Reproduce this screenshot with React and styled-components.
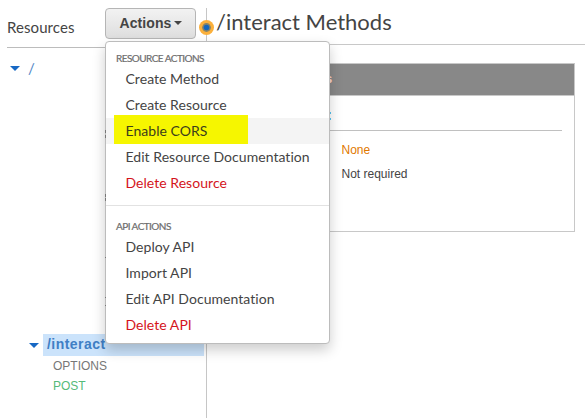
import React from 'react';
import styled, { createGlobalStyle } from 'styled-components';

const Global = createGlobalStyle`
  * { box-sizing: border-box; }
  body { margin: 0; background: #fff; overflow: hidden; font-family: "Liberation Sans", Arial, sans-serif; color: #444; }
`;

const Page = styled.div`
  position: relative;
  display: flex;
  width: 585px;
  height: 418px;
  padding-top: 8px;
  overflow: hidden;
`;

const Sidebar = styled.aside`
  width: 207px;
  border-right: 1px solid #c6c6c6;
  padding-left: 7px;
`;

const SidebarHeader = styled.header`
  display: flex;
  justify-content: space-between;
  width: 189px;
  height: 40px;
  border-bottom: 1px solid #bcbcbc;
`;

const SidebarTitle = styled.h2`
  margin: 0;
  padding-top: 8px;
  font: 400 15px/22px Lato, sans-serif;
  letter-spacing: 0.08px;
`;

const ActionsButton = styled.button`
  display: flex;
  align-items: center;
  justify-content: center;
  gap: 2px;
  width: 91px;
  height: 31px;
  padding: 0 0 2px;
  border: 1px solid #b5b5b5;
  border-radius: 4px;
  background: linear-gradient(#f2f2f2, #dedede);
  color: #444;
  font: 700 14px/20px "Liberation Sans", Arial, sans-serif;
  letter-spacing: 0.1px;
`;

const Caret = styled.span`
  width: 0;
  height: 0;
  border: ${(p) => p.$size}px solid transparent;
  border-top-color: ${(p) => p.$color};
  border-bottom: 0;
`;

const Tree = styled.div`
  display: flex;
  flex-direction: column;
`;

const TreeRow = styled.div`
  display: flex;
  align-items: center;
  height: 22px;
  margin-top: ${(p) => p.$top}px;
  padding-left: ${(p) => p.$indent}px;
`;

const RootPath = styled.span`
  margin-left: 8px;
  color: #5287c6;
  font: 400 15px/20px Lato, sans-serif;
`;

const SelectedPath = styled.div`
  flex: 1;
  height: 22px;
  margin: 0 2px 0 4px;
  padding-left: 4px;
  background: #cbe3fb;
  color: #3f7fc5;
  font-weight: 700;
  font-size: 14px;
  line-height: 20px;
  letter-spacing: 0.45px;
`;

const Method = styled.div`
  height: 20px;
  padding-left: 46px;
  color: ${(p) => p.$color};
  font-size: 12px;
  line-height: 20px;
`;

const Main = styled.main`
  flex: 1;
`;

const Title = styled.h1`
  height: 37px;
  margin: 0;
  padding-left: 9px;
  border-bottom: 1px solid #c8c8c8;
  font: 400 22px/28px Lato, sans-serif;
`;

const Card = styled.section`
  width: 353px;
  height: 169px;
  margin: 18px 0 0 15px;
  border: 1px solid #c8c8c8;
`;

const CardHeader = styled.div`
  height: 32px;
  padding-left: 102px;
  border-bottom: 1px solid #c8c8c8;
  background: #888;
  color: #ffd5c8;
  font: 700 13px/30px "Liberation Sans", Arial, sans-serif;
`;

const CardBody = styled.div`
  margin: 0 12px;
`;

const CardLabel = styled.div`
  height: 35px;
  padding-left: 92px;
  border-bottom: 1px solid #c0c0c0;
  color: #00558f;
  font: 700 14px/38px "Liberation Sans", Arial, sans-serif;
`;

const Value = styled.div`
  height: 24px;
  padding-left: 106.5px;
  color: ${(p) => p.$color};
  font-size: 12px;
  line-height: 24px;
`;

const Values = styled.div`
  padding-top: 7px;
`;

const Focus = styled.svg`
  position: absolute;
  left: 199px;
  top: 20px;
`;

const Menu = styled.nav`
  position: absolute;
  left: 105px;
  top: 41px;
  width: 225px;
  height: 303px;
  padding-top: 9px;
  border: 1px solid #bcbcbc;
  border-radius: 4px;
  background: #fff;
  box-shadow: 0 6px 13px rgba(0, 0, 0, 0.2);
`;

const MenuHeading = styled.div`
  height: 15px;
  padding-left: 10px;
  color: #6c6c6c;
  font: 400 10px/15px Lato, sans-serif;
  letter-spacing: -0.55px;
  -webkit-text-stroke: 0.2px currentColor;
`;

const MenuItem = styled.div`
  height: 26px;
  padding-left: 19.5px;
  color: ${(p) => (p.$danger ? '#d4141c' : '#444')};
  font: 400 14px/26px Lato, sans-serif;
  letter-spacing: 0.04px;
`;

const MarkedItem = styled(MenuItem)`
  display: flex;
  align-items: flex-end;
  padding-left: 8px;
  background: #f4f4f4;
`;

const Marker = styled.div`
  width: 134px;
  height: 29px;
  padding: 3px 0 0 11.5px;
  background: #f6f600;
  color: #3c3d1c;
`;

const Divider = styled.div`
  height: 1px;
  margin: 9px 0 13px;
  background: #e2e2e2;
`;

const EdgeMark = styled.span`
  position: absolute;
  left: 105px;
  top: ${(p) => p.$y}px;
  width: 1px;
  height: ${(p) => p.$h}px;
  background: #777;
`;

const edges = [[130, 3], [135, 3], [194, 3], [198, 3], [257, 1], [297, 1], [305, 1]];

export default function App() {
  return (
    <Page>
      <Global />
      <Sidebar>
        <SidebarHeader>
          <SidebarTitle>Resources</SidebarTitle>
          <ActionsButton>Actions<Caret $size={4} $color="#444" /></ActionsButton>
        </SidebarHeader>
        <Tree>
          <TreeRow $top={9} $indent={3}>
            <Caret $size={5} $color="#1768c4" />
            <RootPath>/</RootPath>
          </TreeRow>
          <TreeRow $top={255} $indent={22}>
            <Caret $size={5} $color="#1768c4" />
            <SelectedPath>/interact</SelectedPath>
          </TreeRow>
          <Method $color="#777">OPTIONS</Method>
          <Method $color="#55ba79">POST</Method>
        </Tree>
      </Sidebar>
      <Main>
        <Title>/interact Methods</Title>
        <Card>
          <CardHeader>s</CardHeader>
          <CardBody>
            <CardLabel>:</CardLabel>
            <Values>
              <Value $color="#df7900">None</Value>
              <Value $color="#444">Not required</Value>
            </Values>
          </CardBody>
        </Card>
      </Main>
      <Focus width="15" height="15" viewBox="0 0 15 15">
        <circle cx="7.5" cy="7.5" r="7.5" fill="#fbb03b" />
        <circle cx="7.5" cy="7.5" r="4.4" fill="#85836a" />
        <circle cx="7.5" cy="7.5" r="2.8" fill="#1266be" />
      </Focus>
      <Menu>
        <MenuHeading>RESOURCE ACTIONS</MenuHeading>
        <MenuItem>Create Method</MenuItem>
        <MenuItem>Create Resource</MenuItem>
        <MarkedItem><Marker>Enable CORS</Marker></MarkedItem>
        <MenuItem>Edit Resource Documentation</MenuItem>
        <MenuItem $danger>Delete Resource</MenuItem>
        <Divider />
        <MenuHeading>API ACTIONS</MenuHeading>
        <MenuItem>Deploy API</MenuItem>
        <MenuItem>Import API</MenuItem>
        <MenuItem>Edit API Documentation</MenuItem>
        <MenuItem $danger>Delete API</MenuItem>
      </Menu>
      {edges.map(([y, h]) => <EdgeMark key={y} $y={y} $h={h} />)}
    </Page>
  );
}
